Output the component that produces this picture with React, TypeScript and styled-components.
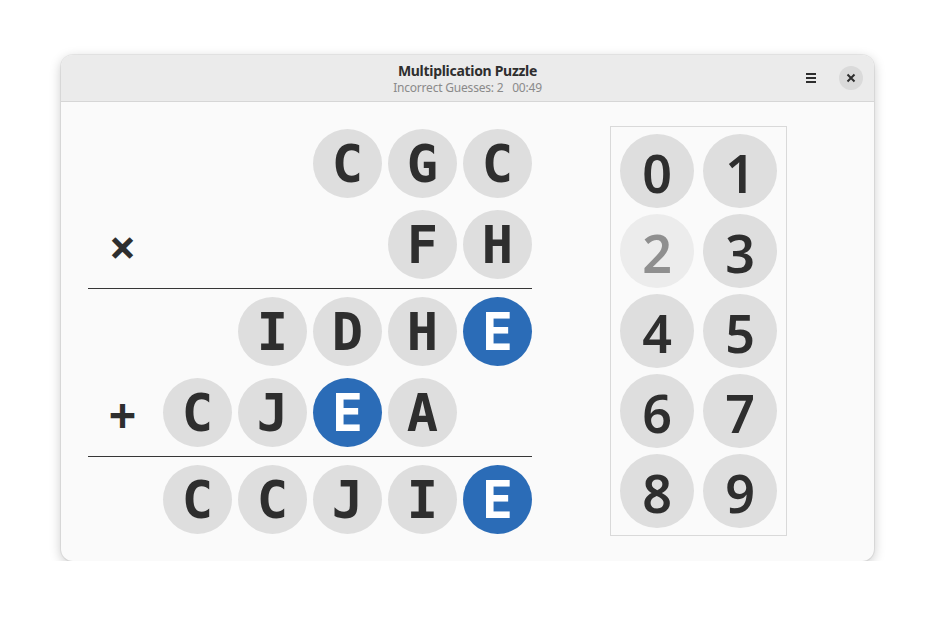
import styled, { createGlobalStyle } from "styled-components";

const GlobalStyle = createGlobalStyle`
  html, body {
    margin: 0;
    padding: 0;
    background: #ffffff;
  }
  * {
    box-sizing: border-box;
  }
`;

type Cell = { ch: string; found?: boolean } | null;

const rows: { op?: string; cells: Cell[] }[] = [
  { cells: [null, null, { ch: "C" }, { ch: "G" }, { ch: "C" }] },
  { op: "×", cells: [null, null, null, { ch: "F" }, { ch: "H" }] },
  { cells: [null, { ch: "I" }, { ch: "D" }, { ch: "H" }, { ch: "E", found: true }] },
  { op: "+", cells: [{ ch: "C" }, { ch: "J" }, { ch: "E", found: true }, { ch: "A" }, null] },
  { cells: [{ ch: "C" }, { ch: "C" }, { ch: "J" }, { ch: "I" }, { ch: "E", found: true }] },
];

const digits = ["0", "1", "2", "3", "4", "5", "6", "7", "8", "9"];
const usedDigits = ["2"];

function PuzzleRow({ op, cells }: { op?: string; cells: Cell[] }) {
  return (
    <Row>
      <Operator>{op ?? ""}</Operator>
      {cells.map((c, i) =>
        c ? (
          <Letter key={i} $found={c.found}>
            {c.ch}
          </Letter>
        ) : (
          <Empty key={i} />
        )
      )}
    </Row>
  );
}

export default function App() {
  return (
    <>
      <GlobalStyle />
      <Window>
        <HeaderBar>
          <Titles>
            <Title>Multiplication Puzzle</Title>
            <Subtitle>Incorrect Guesses: 2&nbsp;&nbsp;&nbsp;00:49</Subtitle>
          </Titles>
          <HeaderButtons>
            <MenuButton>
              <svg width="10" height="10" viewBox="0 0 10 10">
                <rect x="0" y="0" width="10" height="2" fill="#2e2e2e" />
                <rect x="0" y="4" width="10" height="2" fill="#2e2e2e" />
                <rect x="0" y="8" width="10" height="2" fill="#2e2e2e" />
              </svg>
            </MenuButton>
            <CloseButton>
              <svg width="10" height="10" viewBox="0 0 10 10">
                <path d="M1.5 1.5 L8.5 8.5 M8.5 1.5 L1.5 8.5" stroke="#2e2e2e" strokeWidth="2" />
              </svg>
            </CloseButton>
          </HeaderButtons>
        </HeaderBar>
        <Content>
          <Puzzle>
            <PuzzleRow {...rows[0]} />
            <PuzzleRow {...rows[1]} />
            <Rule />
            <PuzzleRow {...rows[2]} />
            <PuzzleRow {...rows[3]} />
            <Rule />
            <PuzzleRow {...rows[4]} />
          </Puzzle>
          <Keypad>
            {digits.map((d) => (
              <DigitButton key={d} $used={usedDigits.includes(d)}>
                {d}
              </DigitButton>
            ))}
          </Keypad>
        </Content>
      </Window>
    </>
  );
}

const Window = styled.div`
  margin: 55px 0 0 61px;
  width: 813px;
  height: 506px;
  border-radius: 12px;
  background: #fafafa;
  box-shadow: 0 0 0 1px rgba(0, 0, 0, 0.06), 0 3px 12px rgba(0, 0, 0, 0.22);
  display: flex;
  flex-direction: column;
  overflow: hidden;
`;

const HeaderBar = styled.div`
  position: relative;
  height: 47px;
  flex-shrink: 0;
  background: #ebebeb;
  border-bottom: 1px solid #d6d6d6;
  display: flex;
  align-items: center;
  justify-content: center;
`;

const Titles = styled.div`
  display: flex;
  flex-direction: column;
  align-items: center;
  gap: 3px;
  font-family: "Noto Sans", "Open Sans", sans-serif;
`;

const Title = styled.div`
  font-size: 14px;
  font-weight: 700;
  color: #2e2e2e;
  line-height: 15px;
  letter-spacing: -0.3px;
`;

const Subtitle = styled.div`
  font-size: 12px;
  color: #8a8a8a;
  line-height: 13px;
  letter-spacing: -0.2px;
`;

const HeaderButtons = styled.div`
  position: absolute;
  right: 11px;
  top: 0;
  bottom: 0;
  display: flex;
  align-items: center;
  gap: 16px;
`;

const MenuButton = styled.div`
  width: 24px;
  height: 24px;
  display: flex;
  align-items: center;
  justify-content: center;
`;

const CloseButton = styled.div`
  width: 24px;
  height: 24px;
  border-radius: 50%;
  background: #dadada;
  display: flex;
  align-items: center;
  justify-content: center;
`;

const Content = styled.div`
  flex: 1;
  display: flex;
  align-items: flex-start;
  padding: 24px 0 0 27px;
  gap: 78px;
`;

const Puzzle = styled.div`
  display: flex;
  flex-direction: column;
  gap: 12px;
  margin-top: 3px;
`;

const Row = styled.div`
  display: grid;
  grid-template-columns: repeat(6, 69px);
  column-gap: 6px;
  height: 69px;
`;

const Operator = styled.div`
  display: flex;
  align-items: center;
  justify-content: center;
  font-family: "DejaVu Sans Mono", monospace;
  font-weight: 700;
  font-size: 44px;
  color: #2e2e2e;
  padding-top: 4px;
`;

const Letter = styled.div<{ $found?: boolean }>`
  width: 69px;
  height: 69px;
  border-radius: 50%;
  background: ${(p) => (p.$found ? "#2b6cb7" : "#dedede")};
  color: ${(p) => (p.$found ? "#ffffff" : "#2e2e2e")};
  display: flex;
  align-items: center;
  justify-content: center;
  font-family: "DejaVu Sans Mono", monospace;
  font-weight: 700;
  font-size: 52px;
  line-height: 1;
`;

const Empty = styled.div``;

const Rule = styled.div`
  height: 1px;
  background: #363636;
  margin: -3px 0 -4px;
`;

const Keypad = styled.div`
  display: grid;
  grid-template-columns: repeat(2, 74px);
  column-gap: 9px;
  row-gap: 6px;
  padding: 7px 9px;
  border: 1px solid #d9d9d9;
`;

const DigitButton = styled.div<{ $used?: boolean }>`
  width: 74px;
  height: 74px;
  border-radius: 50%;
  background: ${(p) => (p.$used ? "#ececec" : "#dedede")};
  color: ${(p) => (p.$used ? "#8f8f8f" : "#2e2e2e")};
  display: flex;
  align-items: center;
  justify-content: center;
  font-family: "Noto Sans", "Open Sans", sans-serif;
  font-weight: 600;
  font-size: 52px;
  line-height: 1;
  padding-top: 4px;
`;
